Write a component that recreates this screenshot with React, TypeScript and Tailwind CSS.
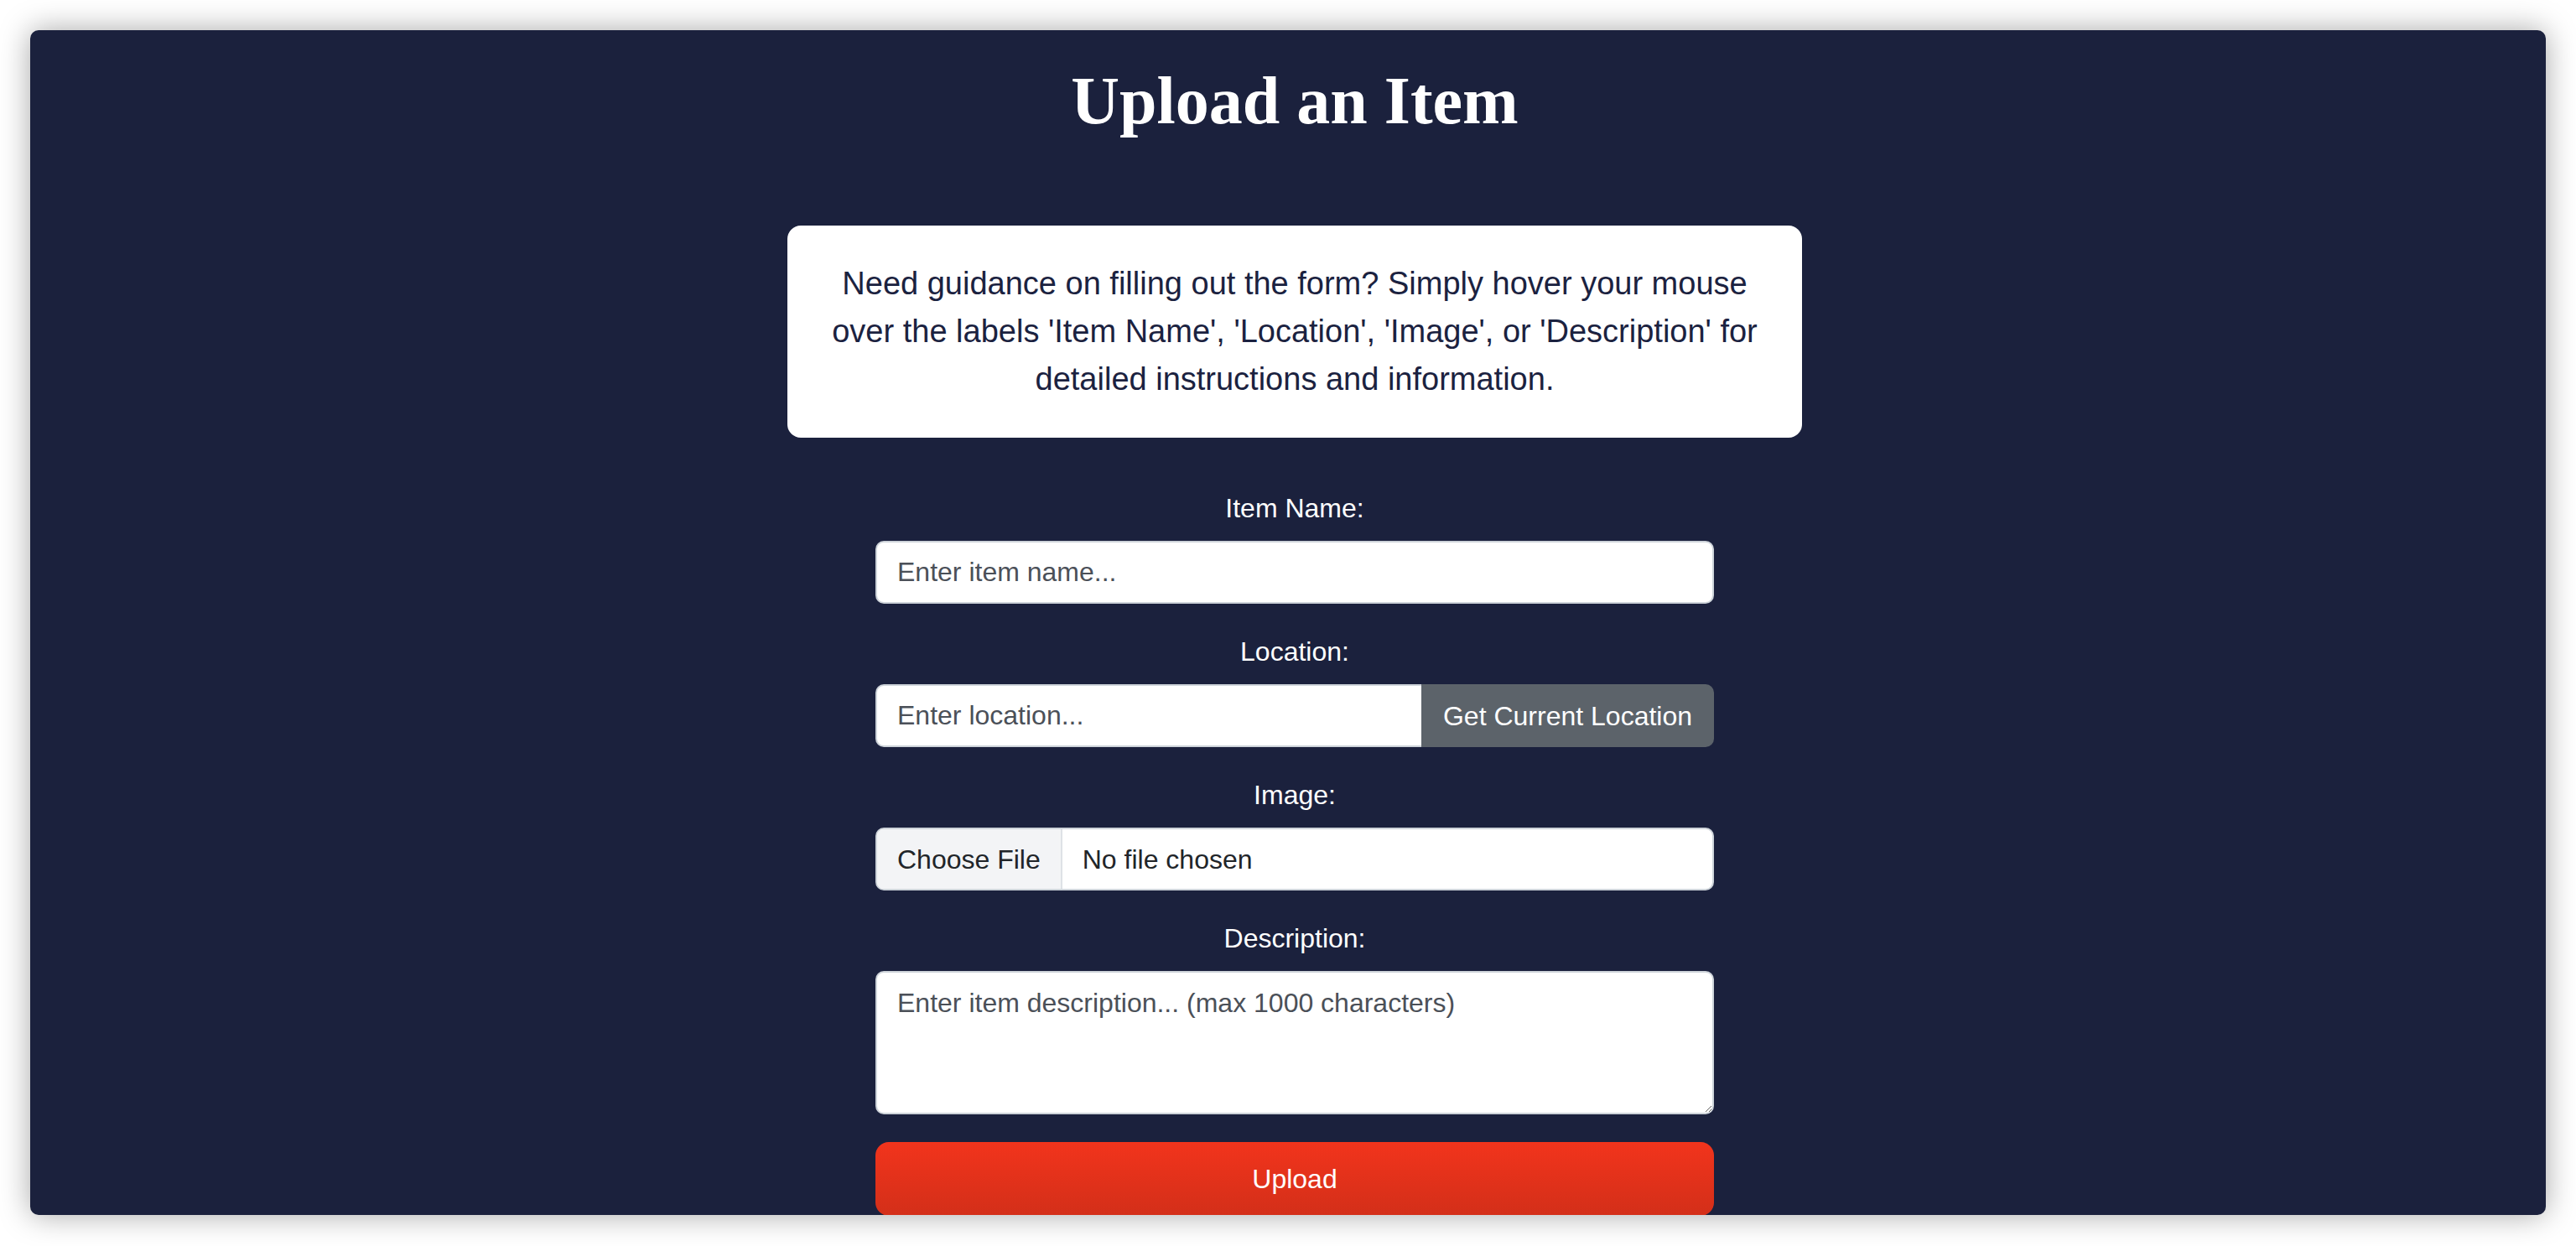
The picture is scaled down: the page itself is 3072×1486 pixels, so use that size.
import React, { useState } from 'react';

const font = { fontFamily: '"Liberation Sans", Arial, sans-serif' };

const Label: React.FC<{ text: string }> = ({ text }) => (
  <label className="block text-center text-white text-[32px] leading-[37px] mb-[20px]">{text}</label>
);

const App: React.FC = () => {
  const [name, setName] = useState('');
  const [location, setLocation] = useState('');
  const [description, setDescription] = useState('');

  return (
    <div className="w-[3072px] h-[1486px] bg-white p-[36px] overflow-hidden">
      <div
        className="w-[3000px] h-[1413px] rounded-[10px] bg-[#1b213d] shadow-[0_0_36px_rgba(0,0,0,0.35)] overflow-hidden pl-[16px]"
        style={font}
      >
        <div className="flex flex-col items-center pt-[38px]">
          <h1 className="font-['Liberation_Serif',serif] font-bold text-white text-[80px] leading-[92px]">
            Upload an Item
          </h1>

          <div className="mt-[103px] w-[1210px] bg-white rounded-[16px] px-[40px] py-[41px] text-center text-[38px] leading-[57px] text-[#1b2240]">
            Need guidance on filling out the form? Simply hover your mouse over the labels 'Item Name', 'Location',
            'Image', or 'Description' for detailed instructions and information.
          </div>

          <form className="w-[1000px] mt-[66px]" onSubmit={(e) => e.preventDefault()}>
            <div className="mb-[39px]">
              <Label text="Item Name:" />
              <input
                value={name}
                onChange={(e) => setName(e.target.value)}
                placeholder="Enter item name..."
                className="block w-full h-[75px] bg-white border-2 border-[#ced4da] rounded-[10px] px-[24px] text-[32px] text-[#212529] placeholder:text-[#4b5058] outline-none"
              />
            </div>

            <div className="mb-[39px]">
              <Label text="Location:" />
              <div className="flex h-[75px]">
                <input
                  value={location}
                  onChange={(e) => setLocation(e.target.value)}
                  placeholder="Enter location..."
                  className="flex-1 min-w-0 h-full bg-white border-2 border-r-0 border-[#ced4da] rounded-l-[10px] px-[24px] text-[32px] text-[#212529] placeholder:text-[#4b5058] outline-none"
                />
                <button
                  type="button"
                  className="w-[349px] h-full bg-[#5c636a] text-white text-[32px] rounded-r-[10px]"
                >
                  Get Current Location
                </button>
              </div>
            </div>

            <div className="mb-[39px]">
              <Label text="Image:" />
              <div className="flex h-[75px] bg-white border-2 border-[#ced4da] rounded-[10px] overflow-hidden text-[32px] text-[#212529]">
                <span className="flex items-center px-[24px] bg-[#f3f4f6] border-r-2 border-[#dee2e6]">Choose File</span>
                <span className="flex items-center px-[24px]">No file chosen</span>
              </div>
            </div>

            <div>
              <Label text="Description:" />
              <textarea
                rows={3}
                value={description}
                onChange={(e) => setDescription(e.target.value)}
                placeholder="Enter item description... (max 1000 characters)"
                className="block w-full h-[171px] resize-y bg-white border-2 border-[#ced4da] rounded-[10px] px-[24px] py-[12px] text-[32px] leading-[48px] text-[#212529] placeholder:text-[#4b5058] outline-none"
              />
            </div>

            <button
              type="submit"
              className="mt-[33px] w-full h-[88px] rounded-[16px] bg-gradient-to-b from-[#f2341c] to-[#d32f19] text-white text-[32px]"
            >
              Upload
            </button>
          </form>
        </div>
      </div>
    </div>
  );
};

export default App;
